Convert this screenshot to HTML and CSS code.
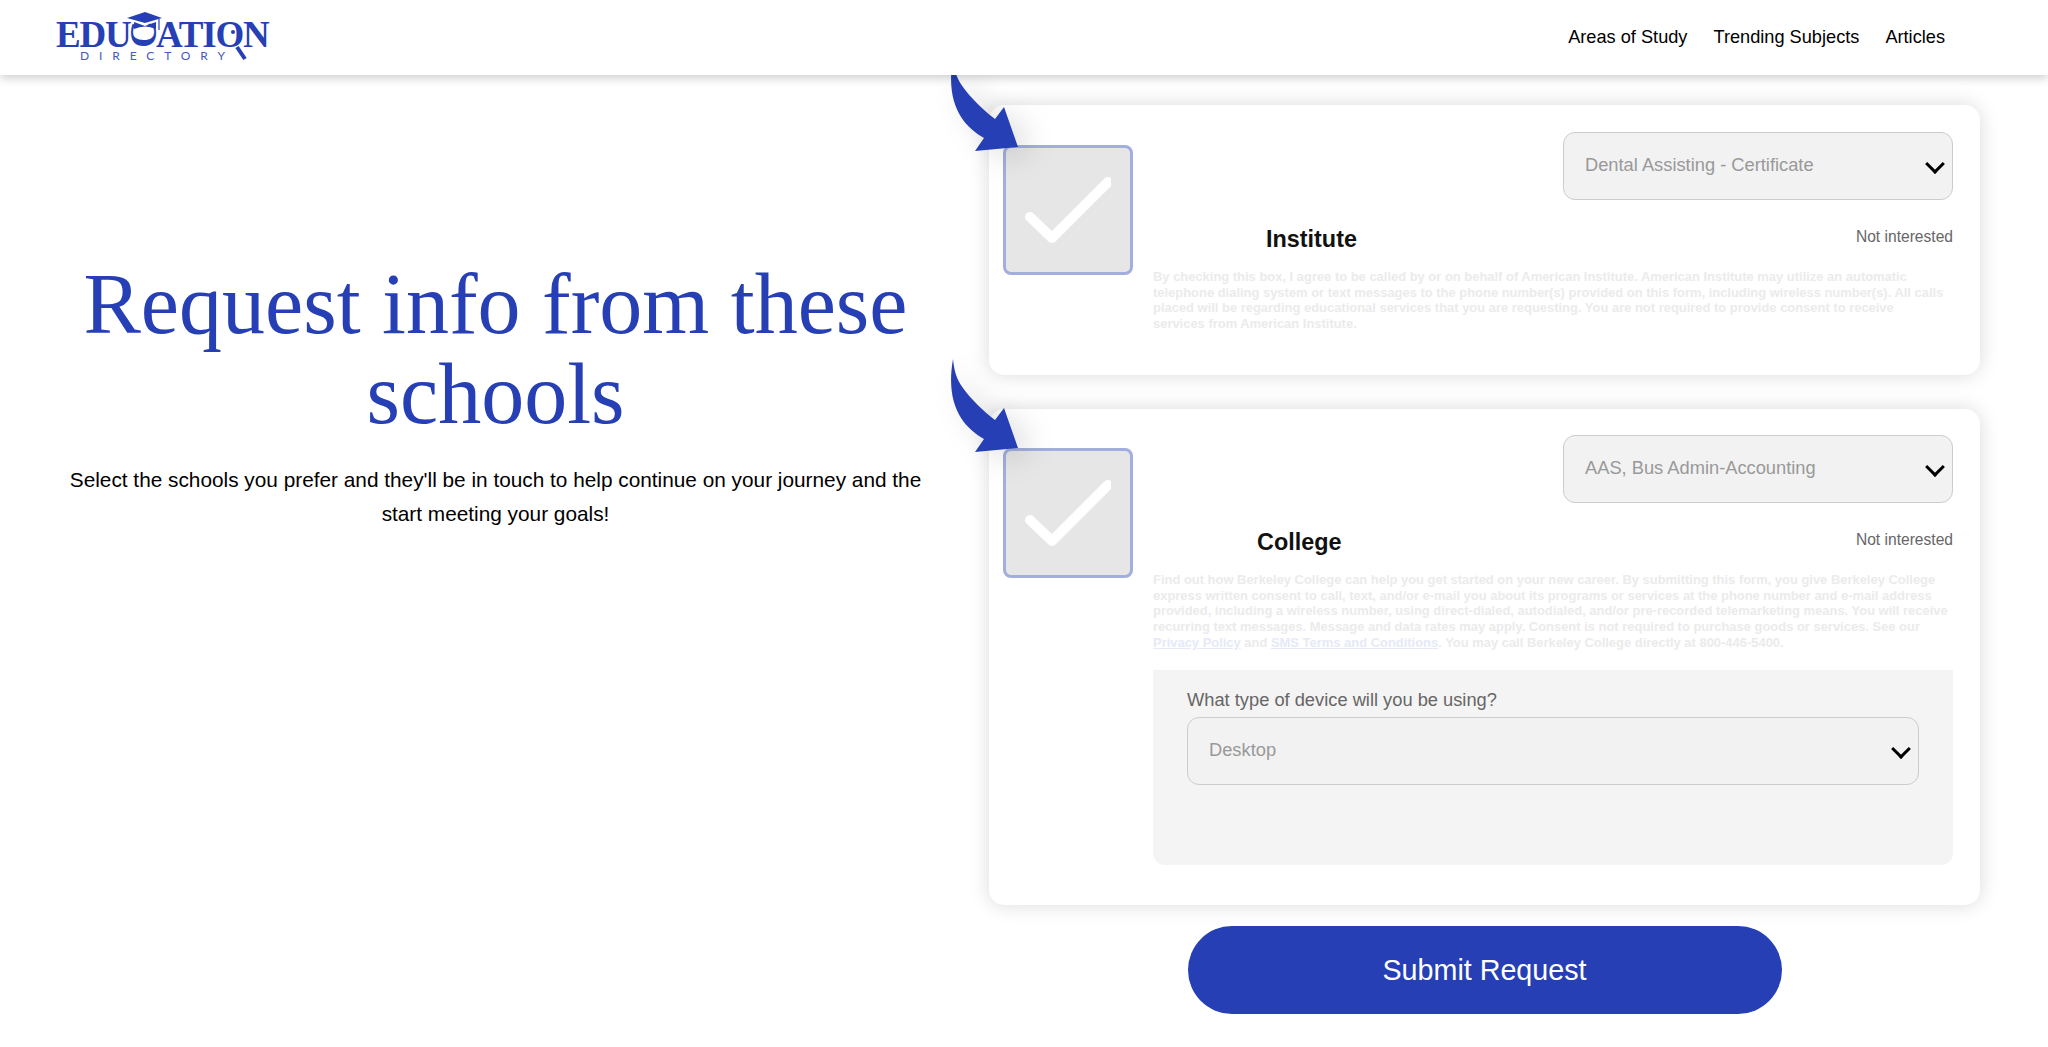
FILE: index.html
```html
<!DOCTYPE html>
<html lang="en">
<head>
    <meta charset="UTF-8">
    <title>Education Directory - Request Info</title>
    <link rel="stylesheet" href="styles.css">
</head>
<body>

<!-- Header -->
<header class="site-header">
    <a class="logo" href="#">
        <span class="logo-main">EDU<span class="logo-u">C</span>ATION</span>
        <span class="logo-sub">DIRECTORY</span>
        <svg class="logo-mark" width="220" height="60" viewBox="0 0 220 60">
            <!-- cap -->
            <path d="M71 10 L89 4 L106 10 L89 15 Z" fill="#263fb5"/>
            <path d="M78 14 L89 18 L100 14 L100 21 Q89 16 78 21 Z" fill="#263fb5"/>
            <path d="M103 11 V22" stroke="#263fb5" stroke-width="1.2"/>
            <!-- magnifier -->
            <circle cx="177" cy="24" r="2" fill="#263fb5"/>
            <path d="M181 39 L189 51" stroke="#263fb5" stroke-width="4"/>
        </svg>
    </a>
    <nav class="site-nav">
        <a href="#">Areas of Study</a>
        <a href="#">Trending Subjects</a>
        <a href="#">Articles</a>
    </nav>
</header>

<main class="page">
    <!-- Intro -->
    <section class="intro">
        <h1>Request info from these schools</h1>
        <p>Select the schools you prefer and they'll be in touch to help continue on your journey and the start meeting your goals!</p>
    </section>

    <!-- Schools -->
    <section class="schools">
        <div class="school-card">
            <svg class="arrow" width="80" height="96" viewBox="0 -16 80 96">
                <path d="M8 -16 C9 -6 11 4 18 13 C26 24 38 36 50 45 L59 33 L73 73 L30 77 L39 64 C18 52 0 30 8 -16 Z" fill="#263fb5"/>
            </svg>
            <div class="check-box">
                <svg width="86" height="66" viewBox="0 0 86 66">
                    <path d="M5 40 L27 61 L83 5" fill="none" stroke="#fff" stroke-width="10" stroke-linecap="round" stroke-linejoin="round"/>
                </svg>
            </div>
            <div class="school-body">
                <div class="school-top">
                    <h2 class="school-name name-institute">Institute</h2>
                    <div class="school-side">
                        <div class="fake-select">Dental Assisting - Certificate</div>
                        <span class="not-interested">Not interested</span>
                    </div>
                </div>
                <p class="legal">By checking this box, I agree to be called by or on behalf of American Institute. American Institute may utilize an automatic telephone dialing system or text messages to the phone number(s) provided on this form, including wireless number(s). All calls placed will be regarding educational services that you are requesting. You are not required to provide consent to receive<br>services from American Institute.</p>
            </div>
        </div>

        <div class="school-card">
            <svg class="arrow" width="80" height="96" viewBox="0 -16 80 96">
                <path d="M8 -16 C9 -6 11 4 18 13 C26 24 38 36 50 45 L59 33 L73 73 L30 77 L39 64 C18 52 0 30 8 -16 Z" fill="#263fb5"/>
            </svg>
            <div class="check-box">
                <svg width="86" height="66" viewBox="0 0 86 66">
                    <path d="M5 40 L27 61 L83 5" fill="none" stroke="#fff" stroke-width="10" stroke-linecap="round" stroke-linejoin="round"/>
                </svg>
            </div>
            <div class="school-body">
                <div class="school-top">
                    <h2 class="school-name name-college">College</h2>
                    <div class="school-side">
                        <div class="fake-select">AAS, Bus Admin-Accounting</div>
                        <span class="not-interested">Not interested</span>
                    </div>
                </div>
                <p class="legal">Find out how Berkeley College can help you get started on your new career. By submitting this form, you give Berkeley College express written consent to call, text, and/or e-mail you about its programs or services at the phone number and e-mail address provided, including a wireless number, using direct-dialed, autodialed, and/or pre-recorded telemarketing means. You will receive recurring text messages. Message and data rates may apply. Consent is not required to purchase goods or services. See our <a href="#">Privacy Policy</a> and <a href="#">SMS Terms and Conditions</a>. You may call Berkeley College directly at 800-446-5400.</p>
                <div class="extra-question">
                    <label>What type of device will you be using?</label>
                    <div class="fake-select">Desktop</div>
                </div>
            </div>
        </div>

        <button class="submit-btn">Submit Request</button>
    </section>
</main>

</body>
</html>
```

FILE: styles.css
```css
* {
    box-sizing: border-box;
}

body {
    margin: 0;
    background: #fff;
    color: #000;
    font-family: "Liberation Sans", Arial, sans-serif;
    height: 1047px;
    overflow: hidden;
}

/* Header */
.site-header {
    position: relative;
    z-index: 2;
    height: 75px;
    display: flex;
    justify-content: space-between;
    align-items: center;
    padding: 0 103px 0 56px;
    background: #fff;
    box-shadow: 0 3px 9px rgba(0,0,0,0.2);
}

.logo {
    position: relative;
    display: flex;
    flex-direction: column;
    width: 216px;
    height: 60px;
    padding-top: 12px;
    color: #263fb5;
    text-decoration: none;
}

.logo-mark {
    position: absolute;
    left: 0;
    top: 0;
}

.logo-main {
    font-family: "Liberation Serif", serif;
    font-weight: bold;
    font-size: 37px;
    line-height: 30px;
    letter-spacing: -1.2px;
    white-space: nowrap;
}

.logo-u {
    display: inline-block;
    transform: rotate(-90deg);
}

.logo-sub {
    margin: -1px 0 0 24px;
    font-family: Lato, sans-serif;
    font-size: 12px;
    line-height: 14px;
    letter-spacing: 9.9px;
    color: #4459c0;
    white-space: nowrap;
}

.site-nav {
    display: flex;
    gap: 26px;
}

.site-nav a {
    color: #000;
    text-decoration: none;
    font-size: 18.2px;
}

/* Page columns */
.page {
    display: flex;
    height: 972px;
}

.intro {
    width: 989px;
    flex: none;
    padding: 184px 62px 0 64px;
    text-align: center;
}

.intro h1 {
    margin: 0 0 24px;
    font-family: "Liberation Serif", Georgia, serif;
    font-weight: normal;
    font-size: 86px;
    line-height: 90px;
    color: #263fb5;
}

.intro p {
    margin: 0;
    font-size: 20.8px;
    line-height: 34px;
}

.schools {
    width: 991px;
    padding-top: 30px;
    display: flex;
    flex-direction: column;
    align-items: center;
    gap: 34px;
}

/* Cards */
.school-card {
    position: relative;
    width: 100%;
    display: flex;
    gap: 20px;
    padding: 27px 27px 40px 14px;
    background: #fff;
    border-radius: 15px;
    box-shadow: 0 0 20px rgba(0,0,0,0.15);
}

.school-card:nth-child(2) {
    padding-top: 26px;
}

.arrow {
    position: absolute;
    left: -44px;
    top: -47px;
    z-index: 1;
    overflow: visible;
    filter: drop-shadow(12px 6px 14px rgba(0,0,0,0.13));
}

.school-card:nth-child(2) .arrow {
    top: -50px;
}

.check-box {
    flex: none;
    width: 130px;
    height: 130px;
    margin-top: 13px;
    display: flex;
    align-items: center;
    justify-content: center;
    background: #e6e6e6;
    border: 3px solid #a2aedd;
    border-radius: 8px;
}

.school-body {
    flex: 1;
    min-width: 0;
}

.school-top {
    display: flex;
    justify-content: space-between;
    height: 137px;
}

.school-name {
    margin: 93px 0 0;
    font-size: 23.4px;
    line-height: 28px;
    color: #111;
}

.name-institute {
    padding-left: 113px;
}

.name-college {
    padding-left: 104px;
}

.school-side {
    width: 390px;
    display: flex;
    flex-direction: column;
    align-items: flex-end;
}

.fake-select {
    position: relative;
    width: 100%;
    height: 68px;
    padding: 0 0 2px 21px;
    display: flex;
    align-items: center;
    background: #f2f2f2;
    border: 1px solid #ccc;
    border-radius: 12px;
    color: #999;
    font-size: 18.3px;
}

.fake-select::after {
    content: "";
    position: absolute;
    right: 10px;
    top: 24px;
    width: 11px;
    height: 11px;
    border-right: 3px solid #000;
    border-bottom: 3px solid #000;
    transform: rotate(45deg);
}

.not-interested {
    margin-top: 28px;
    font-size: 15.6px;
    line-height: 18px;
    color: #666;
}

.legal {
    margin: 0 0 3px;
    font-size: 12.95px;
    font-weight: bold;
    line-height: 15.7px;
    color: #ebebeb;
}

.legal a {
    color: #e6e9f8;
}

.extra-question {
    margin-top: 20px;
    height: 195px;
    padding: 19px 34px 0;
    background: #f4f4f4;
    border-radius: 0 0 12px 12px;
}

.extra-question label {
    display: block;
    margin-bottom: 7px;
    font-size: 18.3px;
    line-height: 21px;
    color: #666;
}

/* Submit */
.submit-btn {
    width: 594px;
    height: 88px;
    margin-top: -13px;
    border: none;
    border-radius: 44px;
    background: #263fb5;
    color: #fff;
    font-family: "Liberation Sans", Arial, sans-serif;
    font-size: 28.7px;
    cursor: pointer;
}
```
